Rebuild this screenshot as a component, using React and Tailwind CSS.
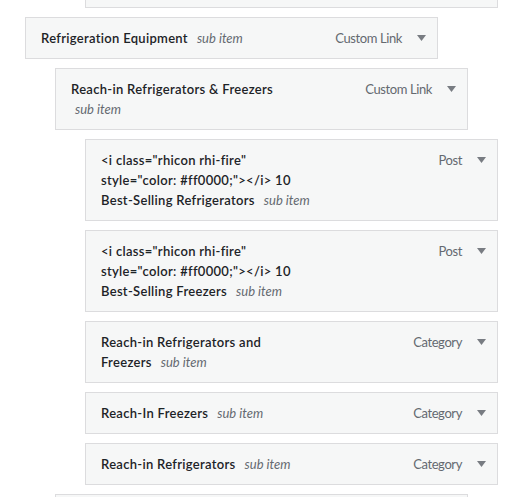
import React from 'react';

const menuItems = [
  { id: 1, depth: 0, lines: ['Refrigeration Equipment'], type: 'Custom Link' },
  { id: 2, depth: 1, lines: ['Reach-in Refrigerators & Freezers'], subOwnLine: true, type: 'Custom Link' },
  {
    id: 3,
    depth: 2,
    lines: ['<i class="rhicon rhi-fire"', 'style="color: #ff0000;"></i> 10', 'Best-Selling Refrigerators'],
    type: 'Post',
  },
  {
    id: 4,
    depth: 2,
    lines: ['<i class="rhicon rhi-fire"', 'style="color: #ff0000;"></i> 10', 'Best-Selling Freezers'],
    type: 'Post',
  },
  { id: 5, depth: 2, lines: ['Reach-in Refrigerators and', 'Freezers'], type: 'Category' },
  { id: 6, depth: 2, lines: ['Reach-In Freezers'], type: 'Category' },
  { id: 7, depth: 2, lines: ['Reach-in Refrigerators'], type: 'Category' },
];

const depthMargin = ['ml-[25px]', 'ml-[55px]', 'ml-[85px]'];

const ArrowDown = () => (
  <svg width="9" height="6" viewBox="0 0 9 6" className="mt-[7px]">
    <polygon points="0,0 9,0 4.5,6" fill="#787c82" />
  </svg>
);

const MenuItem = ({ item }) => {
  const last = item.lines.length - 1;
  return (
    <div
      className={`${depthMargin[item.depth]} mt-[9px] flex w-[413px] justify-between border border-[#dcdcde] bg-[#f6f7f7] py-[10px] pl-[15px] pr-[11px]`}
    >
      <div className="text-[13px] leading-5 font-semibold tracking-[0.3px] text-[#1d2327]">
        {item.lines.map((line, i) => (
          <div key={i}>
            {line}
            {i === last && !item.subOwnLine && (
              <span className="ml-[9px] font-normal italic tracking-normal text-[#646970]">sub item</span>
            )}
          </div>
        ))}
        {item.subOwnLine && (
          <div className="ml-1 font-normal italic tracking-normal text-[#646970]">sub item</div>
        )}
      </div>
      <div className="flex items-start gap-[15px] text-[13px] leading-5 tracking-[-0.4px] text-[#646970]">
        <span>{item.type}</span>
        <ArrowDown />
      </div>
    </div>
  );
};

export default function App() {
  return (
    <div
      className="h-[497px] overflow-hidden bg-white"
      style={{ fontFamily: 'Lato, "Liberation Sans", sans-serif' }}
    >
      {/* tail of the item above the visible range */}
      <div className="ml-[85px] h-[8px] w-[413px] border-x border-b border-[#dcdcde] bg-[#f6f7f7]" />
      {menuItems.map((item) => (
        <MenuItem key={item.id} item={item} />
      ))}
      <div className="ml-[55px] mt-[9px] h-[42px] w-[413px] border border-[#dcdcde] bg-[#f6f7f7]" />
    </div>
  );
}
